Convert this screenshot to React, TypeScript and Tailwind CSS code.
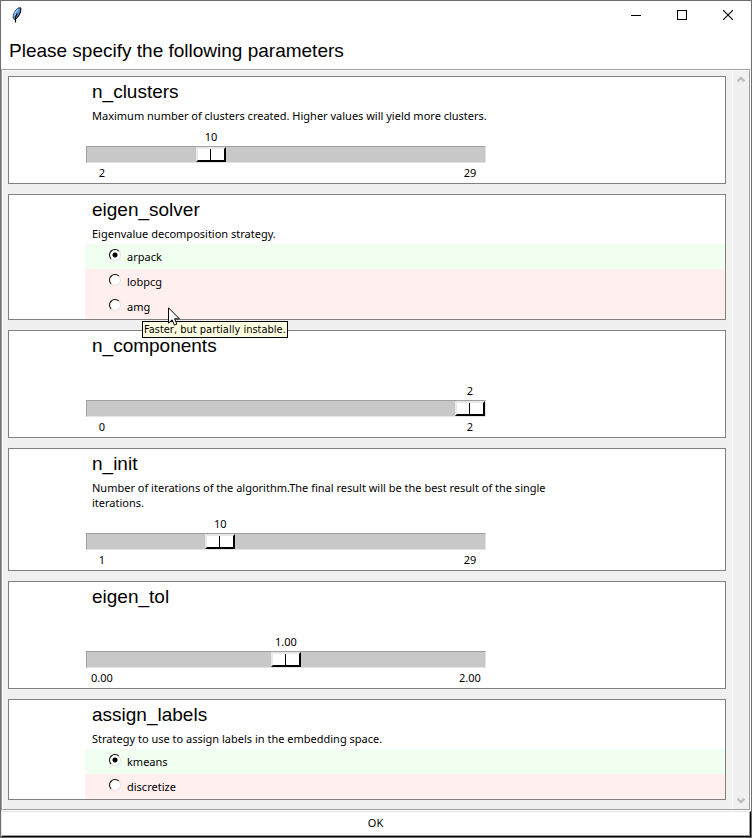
import { useState } from "react";

type Option = { name: string; hint?: string };

function Feather() {
  return (
    <svg width="16" height="16" viewBox="0 0 16 16" aria-hidden="true">
      <path d="M11.5 0.5 L9 1 L6.5 3.5 L4.5 7 L4 10 L5 12.5 L7 12 L9.5 9 L11.5 5 Z" fill="#4f8fdc" stroke="#2a3340" strokeWidth="0.8" />
      <path d="M9 2.5 L6.5 5.5 L5.5 9" fill="none" stroke="#a9d2fa" strokeWidth="1.2" />
      <path d="M12 1 L11.5 5 L9.5 9 L7 12" fill="none" stroke="#000000" strokeWidth="0.9" />
      <path d="M8 6.5 L6.5 10.5 L6.5 15.5" fill="none" stroke="#000000" strokeWidth="1.1" />
    </svg>
  );
}

function TitleBar() {
  const button = "flex h-full w-[46px] items-center justify-center";
  return (
    <header className="flex h-7 items-center justify-between pl-2">
      <Feather />
      <div className="flex h-full">
        <button type="button" aria-label="Minimize" className={button}>
          <svg width="10" height="10" viewBox="0 0 10 10" shapeRendering="crispEdges">
            <path d="M0 5.5H10" stroke="#000" />
          </svg>
        </button>
        <button type="button" aria-label="Maximize" className={button}>
          <svg width="10" height="10" viewBox="0 0 10 10" shapeRendering="crispEdges">
            <path d="M0.5 0.5H9.5V9.5H0.5Z" fill="none" stroke="#000" />
          </svg>
        </button>
        <button type="button" aria-label="Close" className={button}>
          <svg width="10" height="10" viewBox="0 0 10 10">
            <path d="M0 0L10 10M10 0L0 10" stroke="#000" strokeWidth="1.1" />
          </svg>
        </button>
      </div>
    </header>
  );
}

function Card({ title, text, children }: { title: string; text?: string; children: React.ReactNode }) {
  return (
    <section className="border border-[#808080] bg-white pl-[76px]">
      <h2 className="pt-[3px] pl-[7px] font-['Liberation_Sans',Arial,sans-serif] text-[19px] leading-6">{title}</h2>
      <p className="mt-1 mb-[3px] ml-[7px] min-h-[15px] max-w-[480px] leading-[15px]">{text}</p>
      {children}
    </section>
  );
}

function Scale(props: { label: string; min: number; max: number; start: number; digits?: number }) {
  const { label, min, max, start, digits = 0 } = props;
  const [value, setValue] = useState(start);
  const share = (value - min) / (max - min);
  return (
    <div className="ml-px w-[400px] py-[3px]">
      <div className="flex px-px pb-0.5">
        <output
          htmlFor={label}
          className="w-[30px] text-center leading-[15px]"
          style={{ marginLeft: `calc((100% - 30px) * ${share})` }}
        >
          {value.toFixed(digits)}
        </output>
      </div>
      <input
        id={label}
        aria-label={label}
        type="range"
        min={min}
        max={max}
        step={digits ? 0.01 : 1}
        value={value}
        onChange={(e) => setValue(Number(e.target.value))}
        className="block h-[17px] w-full appearance-none border border-t-[#a0a0a0] border-r-[#e3e3e3] border-b-[#e3e3e3] border-l-[#a0a0a0] bg-[#c8c8c8] outline-none [&::-webkit-slider-thumb]:h-[15px] [&::-webkit-slider-thumb]:w-[30px] [&::-webkit-slider-thumb]:appearance-none [&::-webkit-slider-thumb]:border-2 [&::-webkit-slider-thumb]:border-solid [&::-webkit-slider-thumb]:border-t-[#e8e8e8] [&::-webkit-slider-thumb]:border-r-black [&::-webkit-slider-thumb]:border-b-black [&::-webkit-slider-thumb]:border-l-[#e8e8e8] [&::-webkit-slider-thumb]:bg-[linear-gradient(to_right,#fff_12px,#000_12px,#000_13px,#fff_13px)]"
      />
      <div className="flex justify-between px-px pt-0.5 leading-[15px]">
        <span className="w-[30px] text-center">{min.toFixed(digits)}</span>
        <span className="w-[30px] text-center">{max.toFixed(digits)}</span>
      </div>
    </div>
  );
}

function Pointer() {
  return (
    <svg width="12" height="19" viewBox="0 0 12 19" className="absolute top-[13px] left-[83px] z-20" aria-hidden="true">
      <path
        d="M0.5 0.8V16.2L4.1 12.8L6.4 18.1L8.9 17.1L6.6 11.8H11.4Z"
        fill="#fff"
        stroke="#000"
        strokeWidth="1"
      />
    </svg>
  );
}

function Choices({ group, options }: { group: string; options: Option[] }) {
  const [picked, setPicked] = useState(options[0].name);
  return (
    <div role="radiogroup" aria-label={group}>
      {options.map(({ name, hint }) => (
        <div
          key={name}
          className={`relative flex h-[25px] items-center pl-6 ${picked === name ? "bg-[#f0fff0]" : "bg-[#ffefef]"}`}
        >
          <label className="flex items-start gap-1.5">
            <input
              type="radio"
              name={group}
              checked={picked === name}
              onChange={() => setPicked(name)}
              className="h-3 w-3 appearance-none rounded-full border border-t-black border-r-[#e3e3e3] border-b-[#e3e3e3] border-l-black bg-white checked:bg-[radial-gradient(circle,#000_2px,#fff_3px)]"
            />
            <span className="leading-[15px]">{name}</span>
          </label>
          {hint && (
            <>
              <div
                role="tooltip"
                className="absolute top-[27px] left-[57px] z-10 border border-black bg-[#ffffe1] px-px font-['DejaVu_Sans_Condensed',Tahoma,sans-serif] leading-[15px] whitespace-nowrap"
              >
                {hint}
              </div>
              <Pointer />
            </>
          )}
        </div>
      ))}
    </div>
  );
}

function ScrollBar() {
  return (
    <div className="flex w-[17px] flex-col items-center justify-between border-l border-white py-[5px]">
      <button type="button" aria-label="Scroll up">
        <svg width="8" height="7" viewBox="0 0 8 7" className="block">
          <path d="M0.5 5.5L4 2L7.5 5.5" fill="none" stroke="#bfbfbf" strokeWidth="2.4" />
        </svg>
      </button>
      <button type="button" aria-label="Scroll down">
        <svg width="8" height="7" viewBox="0 0 8 7" className="block">
          <path d="M0.5 1.5L4 5L7.5 1.5" fill="none" stroke="#bfbfbf" strokeWidth="2.4" />
        </svg>
      </button>
    </div>
  );
}

export default function App() {
  return (
    <div className="flex min-h-screen flex-col border border-[#6e6e6e] bg-white font-['Noto_Sans','Segoe_UI',sans-serif] text-[11px] text-black">
      <TitleBar />
      <h1 className="flex h-10 items-center pt-1 pl-2 font-['Liberation_Sans',Arial,sans-serif] text-[19px]">
        Please specify the following parameters
      </h1>
      <div className="flex flex-1 border border-t-[#a0a0a0] border-r-white border-b-white border-l-[#a0a0a0]">
        <div className="flex flex-1 border border-t-white border-r-[#a0a0a0] border-b-[#a0a0a0] border-l-white bg-[#f0f0f0]">
          <main className="flex flex-1 flex-col gap-2.5 pt-[5px] pr-1.5 pb-[9px] pl-[5px]">
            <Card
              title="n_clusters"
              text="Maximum number of clusters created. Higher values will yield more clusters."
            >
              <Scale label="n_clusters" min={2} max={29} start={10} />
            </Card>
            <Card title="eigen_solver" text="Eigenvalue decomposition strategy.">
              <Choices
                group="eigen_solver"
                options={[
                  { name: "arpack" },
                  { name: "lobpcg" },
                  { name: "amg", hint: "Faster, but partially instable." },
                ]}
              />
            </Card>
            <Card title="n_components">
              <Scale label="n_components" min={0} max={2} start={2} />
            </Card>
            <Card
              title="n_init"
              text="Number of iterations of the algorithm.The final result will be the best result of the single iterations."
            >
              <Scale label="n_init" min={1} max={29} start={10} />
            </Card>
            <Card title="eigen_tol">
              <Scale label="eigen_tol" min={0} max={2} start={1} digits={2} />
            </Card>
            <Card title="assign_labels" text="Strategy to use to assign labels in the embedding space.">
              <Choices group="assign_labels" options={[{ name: "kmeans" }, { name: "discretize" }]} />
            </Card>
          </main>
          <ScrollBar />
        </div>
      </div>
      <button
        type="button"
        className="border border-t-[#e3e3e3] border-r-black border-b-black border-l-[#e3e3e3] bg-white"
      >
        <span className="flex h-6 items-center justify-center border-r border-b border-[#a0a0a0]">OK</span>
      </button>
    </div>
  );
}
